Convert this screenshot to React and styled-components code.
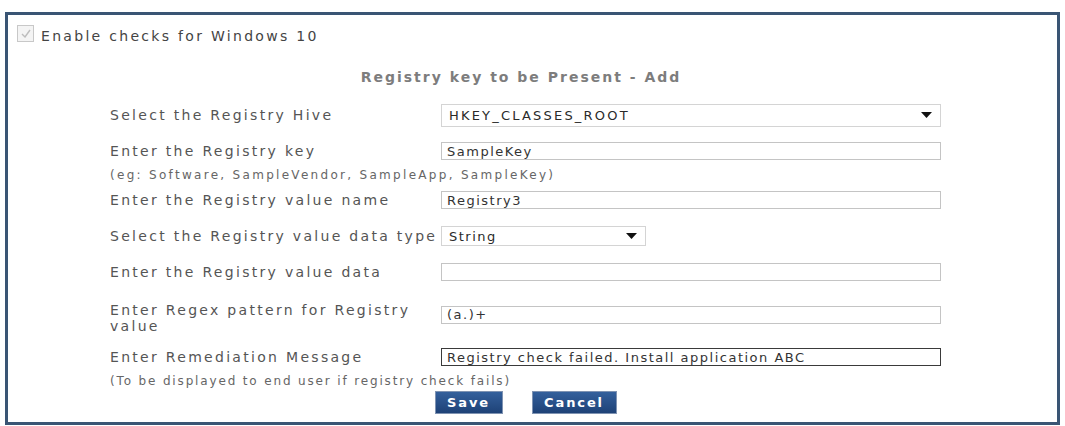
import React from "react"
import styled, { createGlobalStyle } from "styled-components"

const GlobalStyle = createGlobalStyle`
  html, body {
    margin: 0;
    padding: 0;
    background: #fff;
  }
  body {
    font-family: "DejaVu Sans", Verdana, sans-serif;
    color: #555;
  }
`

const Page = styled.div`
  width: 1065px;
  height: 426px;
  padding: 12px 5px 0 5px;
  box-sizing: border-box;
`

const Panel = styled.div`
  width: 1055px;
  height: 413px;
  border: 3px solid #3a5574;
  box-sizing: border-box;
  background: #fff;
`

const CheckRow = styled.label`
  display: flex;
  align-items: center;
  height: 22px;
  margin: 10px 0 0 9px;
  font-size: 14px;
  letter-spacing: 2.3px;
  color: #444;
`

const CheckBox = styled.span`
  width: 15px;
  height: 15px;
  border: 1px solid #c8c8c8;
  background: #f4f4f4;
  display: flex;
  align-items: center;
  justify-content: center;
  margin-right: 7px;
  margin-top: -6px;
`

const Form = styled.div`
  width: 831px;
  margin-left: 102px;
`

const Title = styled.div`
  margin-top: 20px;
  height: 20px;
  line-height: 20px;
  text-align: center;
  padding-right: 9px;
  font-size: 14px;
  font-weight: bold;
  letter-spacing: 2px;
  color: #7d7d7d;
`

const Rows = styled.div`
  margin-top: 10px;
`

const Row = styled.div`
  display: flex;
  align-items: center;
  height: ${(p) => p.$h || 36}px;
`

const Label = styled.div`
  width: 331px;
  flex-shrink: 0;
  font-size: 14px;
  line-height: 16px;
  letter-spacing: 2.3px;
  color: #555;
  white-space: ${(p) => (p.$wrap ? "normal" : "nowrap")};
  padding-right: ${(p) => (p.$wrap ? "30px" : "0")};
  margin-top: ${(p) => (p.$wrap ? "7px" : "0")};
  box-sizing: border-box;
`

const Hint = styled.div`
  height: 13px;
  line-height: 13px;
  font-size: 12px;
  letter-spacing: ${(p) => p.$spacing || 2.3}px;
  color: #666;
  white-space: nowrap;
`

const TextInput = styled.input`
  width: 500px;
  height: 18px;
  box-sizing: border-box;
  margin: 0;
  padding: 0 5px;
  border: 1px solid ${(p) => (p.$dark ? "#3a3a3a" : "#c4c4c4")};
  font-family: "DejaVu Sans", Verdana, sans-serif;
  font-size: 13px;
  letter-spacing: 1.5px;
  color: #333;
  background: #fff;
  outline: none;
`

const SelectBox = styled.div`
  width: ${(p) => p.$w}px;
  height: ${(p) => p.$h}px;
  box-sizing: border-box;
  border: 1px solid #d4d4d4;
  display: flex;
  align-items: center;
  justify-content: space-between;
  padding: 0 8px 0 7px;
  font-size: 13px;
  letter-spacing: ${(p) => p.$spacing || 1.5}px;
  color: #2a2a2a;
  background: #fff;
`

const Caret = () => (
  <svg width="11" height="6" viewBox="0 0 11 6">
    <path d="M0 0 L11 0 L5.5 6 Z" fill="#111" />
  </svg>
)

const Buttons = styled.div`
  display: flex;
  justify-content: center;
  gap: 29px;
  margin-top: 3px;
`

const Button = styled.button`
  width: ${(p) => p.$w}px;
  height: 23px;
  box-sizing: border-box;
  border: 1px solid #7f93b2;
  background: linear-gradient(#34609c, #1e4277);
  color: #fff;
  font-family: "DejaVu Sans", Verdana, sans-serif;
  font-size: 13px;
  font-weight: bold;
  letter-spacing: 1.9px;
  padding: 0;
  cursor: pointer;
`

export default function App() {
  return (
    <Page>
      <GlobalStyle />
      <Panel>
        <CheckRow>
          <CheckBox>
            <svg width="10" height="9" viewBox="0 0 10 9">
              <path d="M1 5 L4 8 L9 1" fill="none" stroke="#bdbdbd" strokeWidth="1.4" />
            </svg>
          </CheckBox>
          Enable checks for Windows 10
        </CheckRow>
        <Form>
          <Title>Registry key to be Present - Add</Title>
          <Rows>
            <Row>
              <Label>Select the Registry Hive</Label>
              <SelectBox $w={500} $h={23} $spacing={2.2}>
                HKEY_CLASSES_ROOT
                <Caret />
              </SelectBox>
            </Row>
            <Row>
              <Label>Enter the Registry key</Label>
              <TextInput defaultValue="SampleKey" readOnly />
            </Row>
            <Hint>(eg: Software, SampleVendor, SampleApp, SampleKey)</Hint>
            <Row>
              <Label>Enter the Registry value name</Label>
              <TextInput defaultValue="Registry3" readOnly />
            </Row>
            <Row>
              <Label>Select the Registry value data type</Label>
              <SelectBox $w={205} $h={20}>
                String
                <Caret />
              </SelectBox>
            </Row>
            <Row>
              <Label>Enter the Registry value data</Label>
              <TextInput defaultValue="" readOnly />
            </Row>
            <Row $h={49}>
              <Label $wrap>Enter Regex pattern for Registry value</Label>
              <TextInput defaultValue="(a.)+" readOnly />
            </Row>
            <Row>
              <Label>Enter Remediation Message</Label>
              <TextInput $dark defaultValue="Registry check failed. Install application ABC" readOnly />
            </Row>
            <Hint $spacing={1.85}>(To be displayed to end user if registry check fails)</Hint>
            <Buttons>
              <Button $w={68}>Save</Button>
              <Button $w={85}>Cancel</Button>
            </Buttons>
          </Rows>
        </Form>
      </Panel>
    </Page>
  )
}
